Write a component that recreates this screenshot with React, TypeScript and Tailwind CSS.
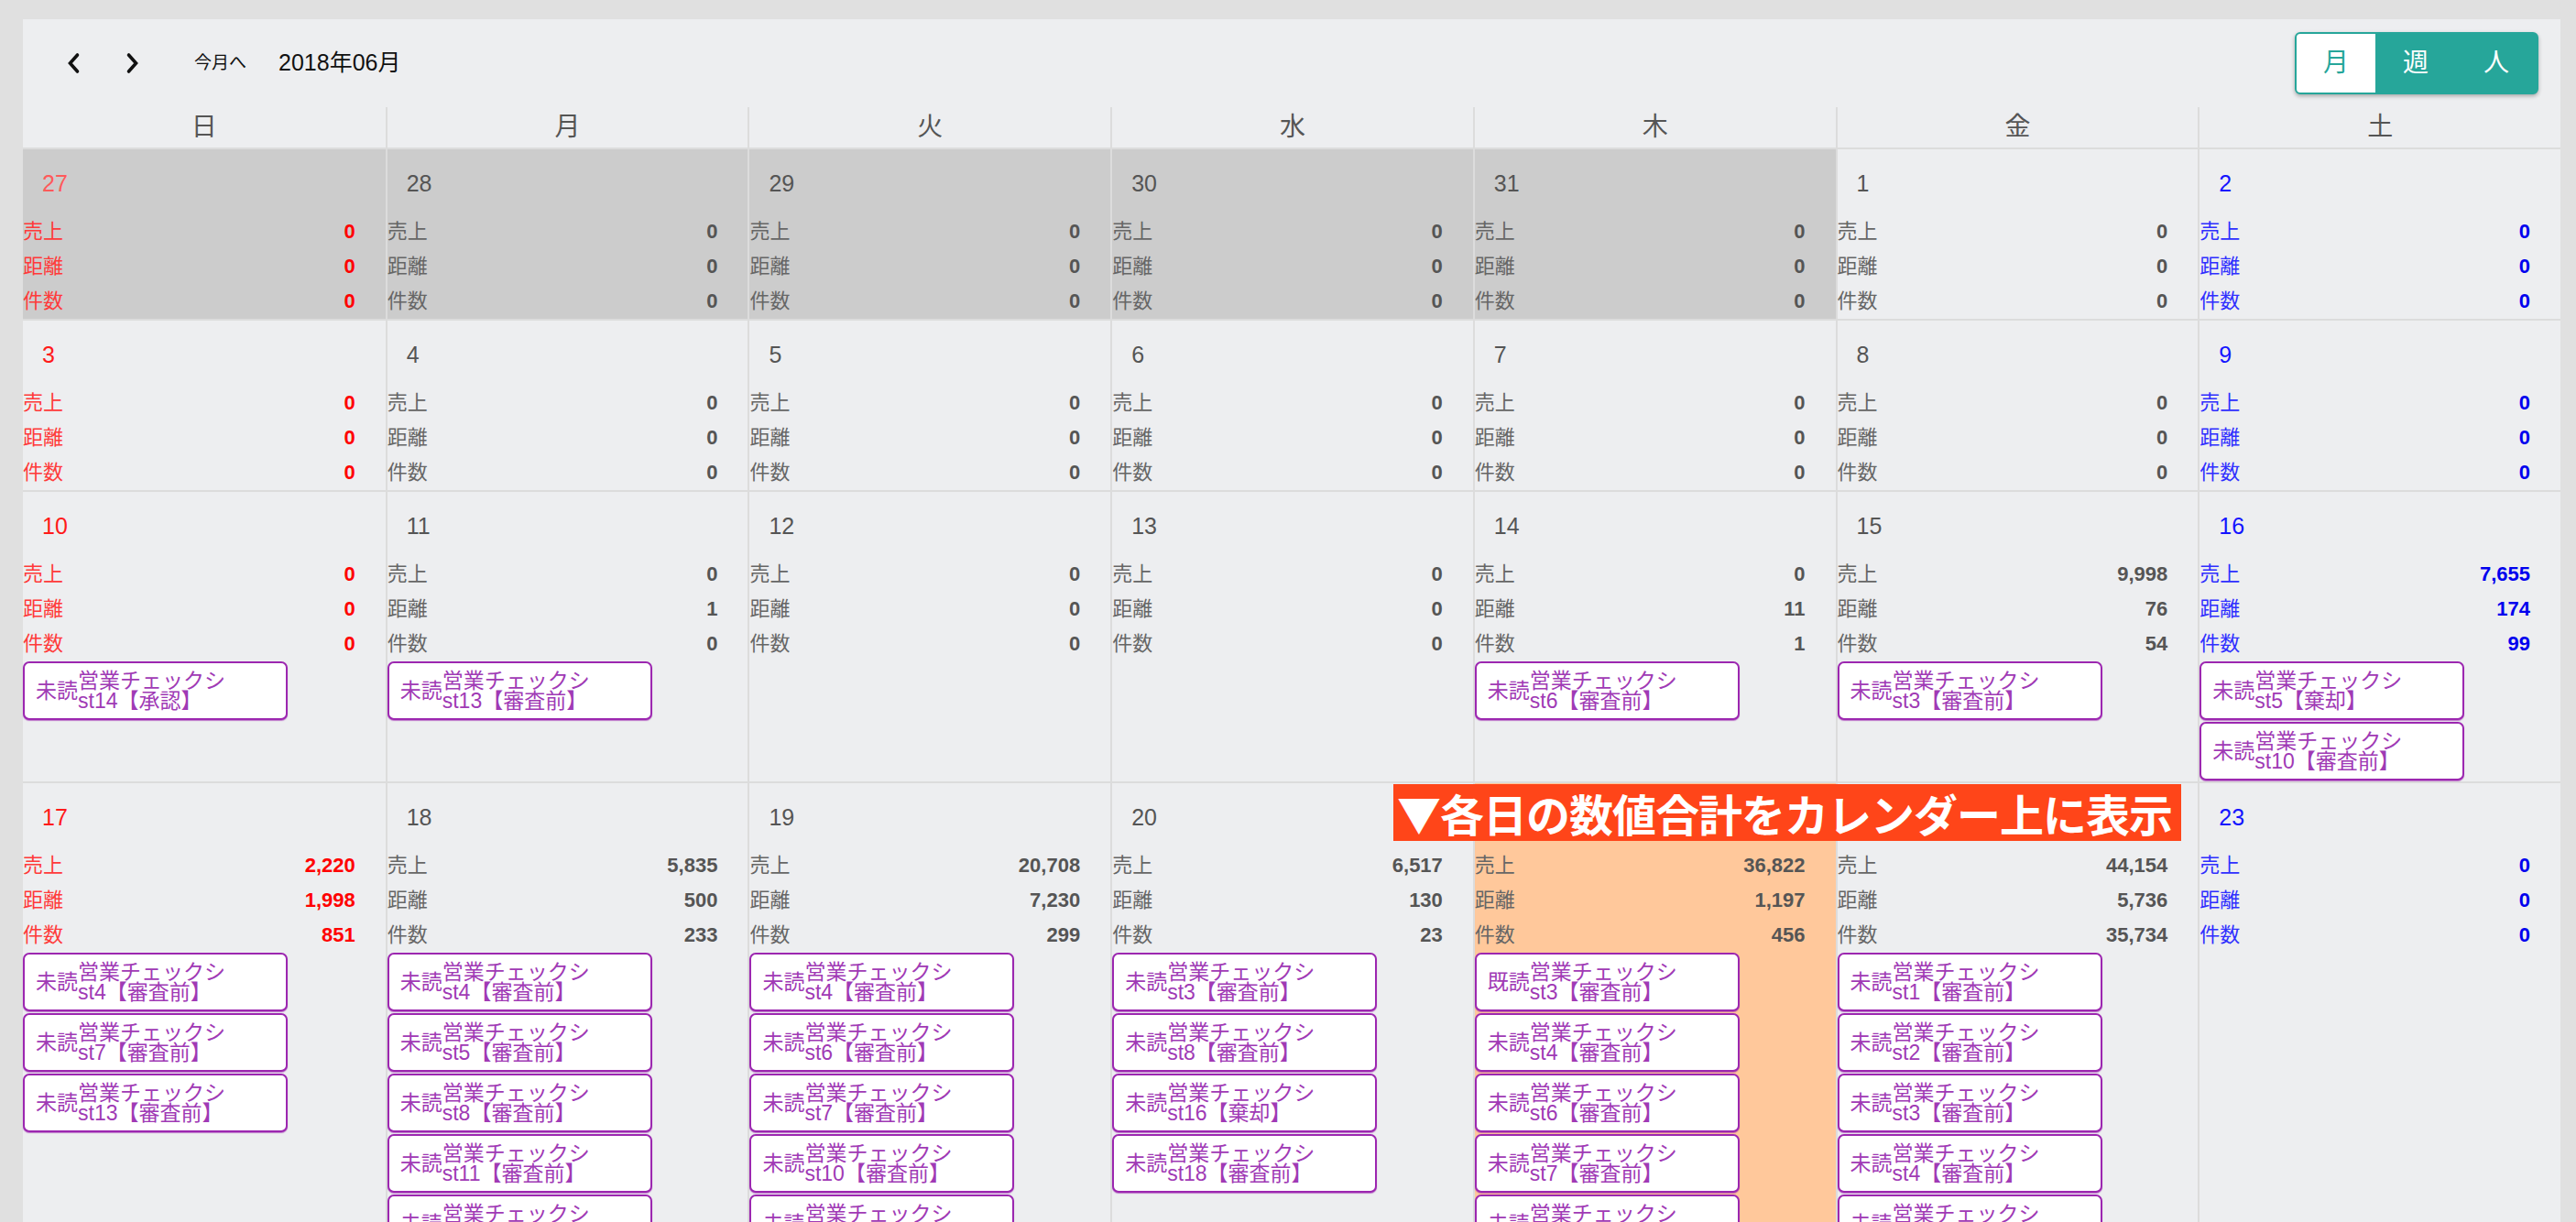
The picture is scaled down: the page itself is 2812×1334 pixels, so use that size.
import React from 'react';

type Item = [string, string];

interface Day {
  d: number;
  v?: [string, string, string];
  prev?: boolean;
  hl?: boolean;
  items?: Item[];
}

const u = (t: string): Item => ['未読', t];
const zero: [string, string, string] = ['0', '0', '0'];

const WEEKDAYS = ['日', '月', '火', '水', '木', '金', '土'];

const weeks: Day[][] = [
  [
    { d: 27, prev: true },
    { d: 28, prev: true },
    { d: 29, prev: true },
    { d: 30, prev: true },
    { d: 31, prev: true },
    { d: 1 },
    { d: 2 },
  ],
  [{ d: 3 }, { d: 4 }, { d: 5 }, { d: 6 }, { d: 7 }, { d: 8 }, { d: 9 }],
  [
    { d: 10, items: [u('st14【承認】')] },
    { d: 11, v: ['0', '1', '0'], items: [u('st13【審査前】')] },
    { d: 12 },
    { d: 13 },
    { d: 14, v: ['0', '11', '1'], items: [u('st6【審査前】')] },
    { d: 15, v: ['9,998', '76', '54'], items: [u('st3【審査前】')] },
    { d: 16, v: ['7,655', '174', '99'], items: [u('st5【棄却】'), u('st10【審査前】')] },
  ],
  [
    { d: 17, v: ['2,220', '1,998', '851'], items: [u('st4【審査前】'), u('st7【審査前】'), u('st13【審査前】')] },
    {
      d: 18,
      v: ['5,835', '500', '233'],
      items: [u('st4【審査前】'), u('st5【審査前】'), u('st8【審査前】'), u('st11【審査前】'), u('st12【審査前】')],
    },
    {
      d: 19,
      v: ['20,708', '7,230', '299'],
      items: [u('st4【審査前】'), u('st6【審査前】'), u('st7【審査前】'), u('st10【審査前】'), u('st11【審査前】')],
    },
    {
      d: 20,
      v: ['6,517', '130', '23'],
      items: [u('st3【審査前】'), u('st8【審査前】'), u('st16【棄却】'), u('st18【審査前】')],
    },
    {
      d: 21,
      hl: true,
      v: ['36,822', '1,197', '456'],
      items: [['既読', 'st3【審査前】'], u('st4【審査前】'), u('st6【審査前】'), u('st7【審査前】'), u('st8【審査前】')],
    },
    {
      d: 22,
      v: ['44,154', '5,736', '35,734'],
      items: [u('st1【審査前】'), u('st2【審査前】'), u('st3【審査前】'), u('st4【審査前】'), u('st5【審査前】')],
    },
    { d: 23 },
  ],
];

const tone = (col: number, prev?: boolean) => {
  if (col === 0) {
    return {
      date: prev ? 'text-[#ff5a5a]' : 'text-[#ff1a1a]',
      label: 'text-[#ff3a3a]',
      val: 'text-[#ff0000]',
    };
  }
  if (col === 6) {
    return { date: 'text-[#1414ff]', label: 'text-[#2f2fff]', val: 'text-[#0000ee]' };
  }
  return { date: 'text-[#555]', label: 'text-[#666]', val: 'text-[#555]' };
};

const Chevron: React.FC<{ dir: 'left' | 'right' }> = ({ dir }) => (
  <svg width="16" height="24" viewBox="0 0 16 24" fill="none">
    <path
      d={dir === 'left' ? 'M12.5 3 L4.5 12 L12.5 21' : 'M3.5 3 L11.5 12 L3.5 21'}
      stroke="#111"
      strokeWidth="3.6"
      strokeLinecap="round"
      strokeLinejoin="miter"
    />
  </svg>
);

const CheckBox: React.FC<{ item: Item }> = ({ item }) => (
  <div className="flex w-[289px] h-[64px] items-center rounded-[7px] border-2 border-[#9c27b0] bg-white pl-[12px] text-[#a03ab5] shadow-[0_1px_1px_rgba(156,39,176,0.6)]">
    <span className="text-[23px] leading-[22px]">{item[0]}</span>
    <div className="flex flex-col text-[23px] leading-[22px]">
      <span>営業チェックシ</span>
      <span>{item[1]}</span>
    </div>
  </div>
);

const DayCell: React.FC<{ day: Day; col: number }> = ({ day, col }) => {
  const t = tone(col, day.prev);
  const v = day.v ?? zero;
  const bg = day.prev ? 'bg-[#cccccc]' : day.hl ? 'bg-[#ffc89b]' : '';
  const border = col === 0 ? '' : 'border-l-2 border-[#dcdcdc]';

  return (
    <div className={`${bg} ${border} pb-[1px]`}>
      <div className={`h-[70px] pt-[24px] pl-[21px] text-[25px] leading-[26px] ${t.date}`}>{day.d}</div>
      <div className="pr-[33px]">
        {['売上', '距離', '件数'].map((label, i) => (
          <div key={label} className="flex h-[38px] items-center justify-between">
            <span className={`text-[22px] ${t.label}`}>{label}</span>
            <span className={`text-[22px] font-bold ${t.val}`}>{v[i]}</span>
          </div>
        ))}
      </div>
      {day.items && (
        <div className="mt-[1px] flex flex-col gap-[2px]">
          {day.items.map((it, i) => (
            <CheckBox key={i} item={it} />
          ))}
        </div>
      )}
    </div>
  );
};

export default function App() {
  return (
    <div className="min-h-screen bg-[#e0e0e0] pt-[21px] pl-[25px] pr-[17px] font-['Liberation_Sans','Noto_Sans_CJK_JP',sans-serif]">
      <div className="bg-[#edeef0]">
        <div className="flex h-[96px] items-center justify-between pr-[24px]">
          <div className="flex items-center">
            <div className="ml-[47px]">
              <Chevron dir="left" />
            </div>
            <div className="ml-[49px]">
              <Chevron dir="right" />
            </div>
            <span className="ml-[59px] text-[19px] text-[#111]">今月へ</span>
            <span className="ml-[35px] text-[25px] text-[#111]">2018年06月</span>
          </div>
          <div className="flex h-[68px] overflow-hidden rounded-[6px] border-2 border-[#26a69a] bg-[#26a69a] shadow-[0_2px_4px_rgba(0,0,0,0.3)]">
            <div className="flex w-[86px] items-center justify-center bg-white text-[28px] text-[#26a69a]">月</div>
            <div className="flex w-[88px] items-center justify-center text-[28px] text-white">週</div>
            <div className="flex w-[88px] items-center justify-center text-[28px] text-white">人</div>
          </div>
        </div>

        <div className="grid grid-cols-7 border-b-2 border-[#dcdcdc]">
          {WEEKDAYS.map((w, i) => (
            <div
              key={w}
              className={`flex h-[44px] items-center justify-center text-[28px] text-[#555] ${i === 0 ? '' : 'border-l-2 border-[#dcdcdc]'}`}
            >
              {w}
            </div>
          ))}
        </div>

        {weeks.map((week, wi) => (
          <div key={wi} className="relative grid grid-cols-7 items-stretch border-b-2 border-[#dcdcdc]">
            {week.map((day, ci) => (
              <DayCell key={ci} day={day} col={ci} />
            ))}
            {wi === 3 && (
              <div className="absolute left-[1496px] top-[1px] flex h-[62px] w-[860px] items-center overflow-hidden whitespace-nowrap bg-[#ff4519] px-[4px] font-['Noto_Sans_CJK_JP',sans-serif] text-[48px] font-bold leading-[62px] tracking-[-1px] text-white">
                ▼各日の数値合計をカレンダー上に表示
              </div>
            )}
          </div>
        ))}
      </div>
    </div>
  );
}
